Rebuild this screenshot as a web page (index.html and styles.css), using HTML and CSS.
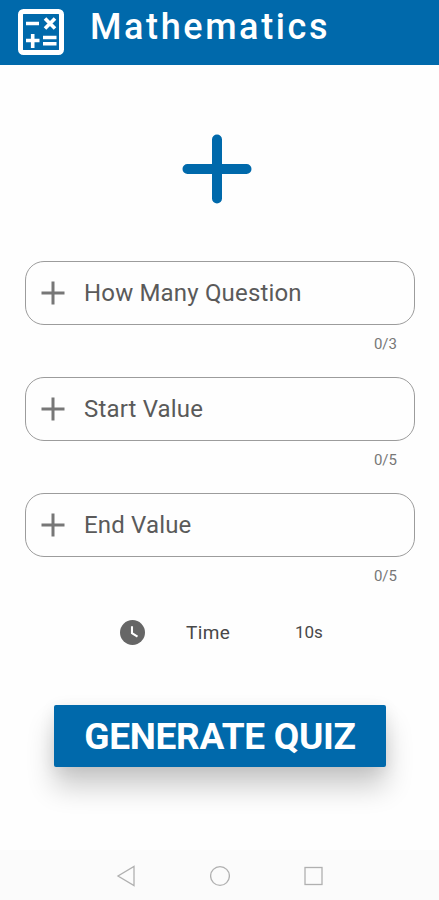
FILE: index.html
```
<!DOCTYPE html>
<html lang="en">
<head>
  <meta charset="UTF-8" />
  <meta name="viewport" content="width=device-width, initial-scale=1.0" />
  <title>Mathematics</title>
  <link rel="stylesheet" href="styles.css">
</head>
<body>
  <header class="header">
    <svg class="logo" viewBox="0 0 46 46" fill="none" stroke="#fff" stroke-width="3.6">
      <rect x="2.5" y="2.5" width="41" height="41" rx="3" stroke-width="5" />
      <path d="M8 14.5H21M27 9.5L37 19.5M37 9.5L27 19.5M8 31.5H21.5M14.7 25V39M25 28.5H38.5M25 34.8H38.5" />
    </svg>
    <h1>Mathematics</h1>
  </header>

  <main class="container">
    <svg class="operation" viewBox="0 0 70 70">
      <path d="M35 5.5V64.5M5.5 35H64.5" stroke="#0069ab" stroke-width="10" stroke-linecap="round" />
    </svg>

    <div class="field">
      <div class="field-box">
        <svg class="plus" viewBox="0 0 24 24"><path d="M12 .5V23.5M.5 12H23.5" /></svg>
        <span>How Many Question</span>
      </div>
      <div class="counter">0/3</div>
    </div>

    <div class="field">
      <div class="field-box">
        <svg class="plus" viewBox="0 0 24 24"><path d="M12 .5V23.5M.5 12H23.5" /></svg>
        <span>Start Value</span>
      </div>
      <div class="counter">0/5</div>
    </div>

    <div class="field">
      <div class="field-box">
        <svg class="plus" viewBox="0 0 24 24"><path d="M12 .5V23.5M.5 12H23.5" /></svg>
        <span>End Value</span>
      </div>
      <div class="counter">0/5</div>
    </div>

    <div class="time">
      <svg class="clock" viewBox="0 0 24 24">
        <circle cx="12" cy="12" r="12" fill="#666" />
        <path d="M11.5 6V12.7L16.8 16" fill="none" stroke="#fff" stroke-width="2" />
      </svg>
      <span class="time-label">Time</span>
      <span class="time-value">10s</span>
    </div>

    <button class="generate">GENERATE QUIZ</button>
  </main>

  <nav class="navbar">
    <svg viewBox="0 0 20 22"><path d="M18 1.5V20.5L2 11Z" /></svg>
    <svg viewBox="0 0 20 22"><circle cx="10" cy="11" r="9.4" /></svg>
    <svg viewBox="0 0 20 22"><rect x="1" y="2.5" width="17" height="17" /></svg>
  </nav>
</body>
</html>
```
FILE: styles.css
```
* {
  margin: 0;
  padding: 0;
  box-sizing: border-box;
  font-family: Roboto, sans-serif;
}

body {
  height: 900px;
  background: #fefefe;
  color: #5a5a5a;
  display: flex;
  flex-direction: column;
  overflow: hidden;
}

.header {
  height: 65px;
  flex: none;
  background: #0069ab;
  color: #fff;
  display: flex;
  padding: 9px 18px 0;
}

.logo {
  width: 46px;
  height: 46px;
}

.header h1 {
  margin-left: 26px;
  margin-top: -3px;
  font-size: 36px;
  font-weight: 500;
  line-height: 42px;
  letter-spacing: 2.6px;
}

.container {
  flex: 1;
  padding: 69px 24px 0 25px;
  display: flex;
  flex-direction: column;
}

.operation {
  width: 70px;
  height: 70px;
  margin: 0 0 57px 157px;
}

.field {
  height: 116px;
}

.field-box {
  height: 64px;
  border: 1px solid #9c9c9c;
  border-radius: 19px;
  display: flex;
  align-items: center;
  padding-left: 15px;
  font-size: 24px;
  letter-spacing: 0.17px;
}

.plus {
  width: 24px;
  height: 24px;
  margin-right: 19px;
}

.plus path {
  stroke: #777;
  stroke-width: 3;
}

.counter {
  margin-top: 10px;
  padding-right: 18px;
  text-align: right;
  font-size: 15px;
  line-height: 18px;
  color: #777;
}

.time {
  height: 26px;
  margin-top: 10px;
  padding-left: 95px;
  display: flex;
  align-items: center;
  color: #484848;
}

.clock {
  width: 25px;
  height: 25px;
}

.time-label {
  width: 109px;
  margin-left: 41px;
  font-size: 19px;
  letter-spacing: 0.4px;
}

.time-value {
  font-size: 17px;
}

.generate {
  width: 332px;
  height: 62px;
  margin: 60px 0 0 29px;
  background: #0069ab;
  color: #fff;
  border: none;
  border-radius: 2px;
  font-size: 37px;
  font-weight: 700;
  letter-spacing: -0.3px;
  white-space: nowrap;
  box-shadow: 0 20px 28px rgba(0, 0, 0, 0.2), 0 3px 16px rgba(0, 0, 0, 0.08);
}

.navbar {
  height: 50px;
  flex: none;
  background: #fbfbfb;
  display: flex;
  align-items: center;
  gap: 74px;
  padding: 2px 0 0 116px;
}

.navbar svg {
  width: 20px;
  height: 22px;
  fill: none;
  stroke: #b0b0b0;
  stroke-width: 1.3;
}
```
